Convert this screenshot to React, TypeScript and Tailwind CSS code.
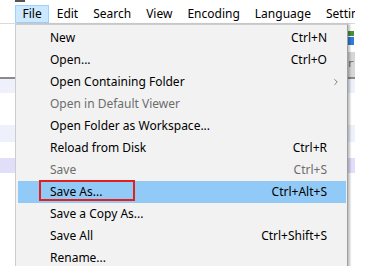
import { ChevronRight } from "lucide-react";

type Item = {
  label: string;
  shortcut?: string;
  disabled?: boolean;
  submenu?: boolean;
  active?: boolean;
};

const menuBar = ["File", "Edit", "Search", "View", "Encoding", "Language", "Settings"];

const items: Item[] = [
  { label: "New", shortcut: "Ctrl+N" },
  { label: "Open...", shortcut: "Ctrl+O" },
  { label: "Open Containing Folder", submenu: true },
  { label: "Open in Default Viewer", disabled: true },
  { label: "Open Folder as Workspace..." },
  { label: "Reload from Disk", shortcut: "Ctrl+R" },
  { label: "Save", shortcut: "Ctrl+S", disabled: true },
  { label: "Save As...", shortcut: "Ctrl+Alt+S", active: true },
  { label: "Save a Copy As..." },
  { label: "Save All", shortcut: "Ctrl+Shift+S" },
  { label: "Rename..." },
];

function MenuRow({ item }: { item: Item }) {
  return (
    <div
      className={`relative flex h-[22px] items-center pl-[32px] ${
        item.active ? "bg-[#91c9f7]" : ""
      } ${item.disabled ? "text-[#6d6d6d]" : "text-black"}`}
    >
      <span className="flex-1 whitespace-nowrap">{item.label}</span>
      {item.shortcut && <span className="whitespace-nowrap">{item.shortcut}</span>}
      <span className="flex w-[19px] items-center pl-[4px]">
        {item.submenu && <ChevronRight size={10} strokeWidth={1.5} className="text-[#333]" />}
      </span>
      {/* red annotation box */}
      {item.active && (
        <div className="absolute left-[21px] top-[-1px] h-[21px] w-[96px] border-2 border-[#e3211c]" />
      )}
    </div>
  );
}

export default function App() {
  return (
    <div className="relative h-[266px] w-[373px] overflow-hidden bg-white font-['Noto_Sans',sans-serif] text-[12px]">
      {/* window behind the menu, clipped at its right edge */}
      <div className="flex w-[355px] flex-col overflow-hidden">
        <div className="h-[2px]">
          <div className="ml-[15px] h-[1.5px] w-[10px] bg-[#555]" />
        </div>
        <div className="flex h-[22px] items-start overflow-hidden border-b border-[#dadada] pl-[15px] pt-[3px]">
          {menuBar.map((m, i) => (
            <div
              key={m}
              className={`flex h-[18px] shrink-0 items-center whitespace-nowrap px-[6.5px] leading-none ${
                i === 0 ? "border border-[#99d1ff] bg-[#cce8ff]" : "border border-transparent"
              }`}
            >
              {m}
            </div>
          ))}
        </div>
        <div className="flex h-[28px] items-center justify-end pr-[1px]">
          <div className="flex h-[14px] w-[8px] flex-col gap-[1px]">
            <div className="h-[5px] bg-[#4b8f3c]" />
            <div className="h-[8px] bg-[#2f7bd8]" />
          </div>
        </div>
        <div className="flex h-[27px] items-end justify-end border-b-2 border-[#8a8a8a]">
          <div className="flex h-[25px] w-[40px] items-center justify-end bg-[#d6d6d6] pr-[1px] font-['DejaVu_Sans_Mono',monospace] text-[11px] text-[#666]">
            er
          </div>
        </div>
        <div className="flex flex-col">
          <div className="h-[14px] bg-[#eef0fb]" />
          <div className="h-[32px]" />
          <div className="h-[17px] bg-[#eef0fb]" />
          <div className="h-[16px]" />
          <div className="h-[15px] bg-[#e0def8]" />
        </div>
      </div>

      {/* File menu popup */}
      <div className="absolute left-[15px] top-[24px] w-[333px] border-l border-t border-r border-l-[#cccccc] border-t-[#cccccc] border-r-[#a0a0a0] bg-[#f2f2f2] pb-[2px] pl-[2px] pr-[1px] pt-[2px] shadow-[2px_0_2px_rgba(0,0,0,0.25)]">
        {items.map((it) => (
          <MenuRow key={it.label} item={it} />
        ))}
      </div>
    </div>
  );
}
